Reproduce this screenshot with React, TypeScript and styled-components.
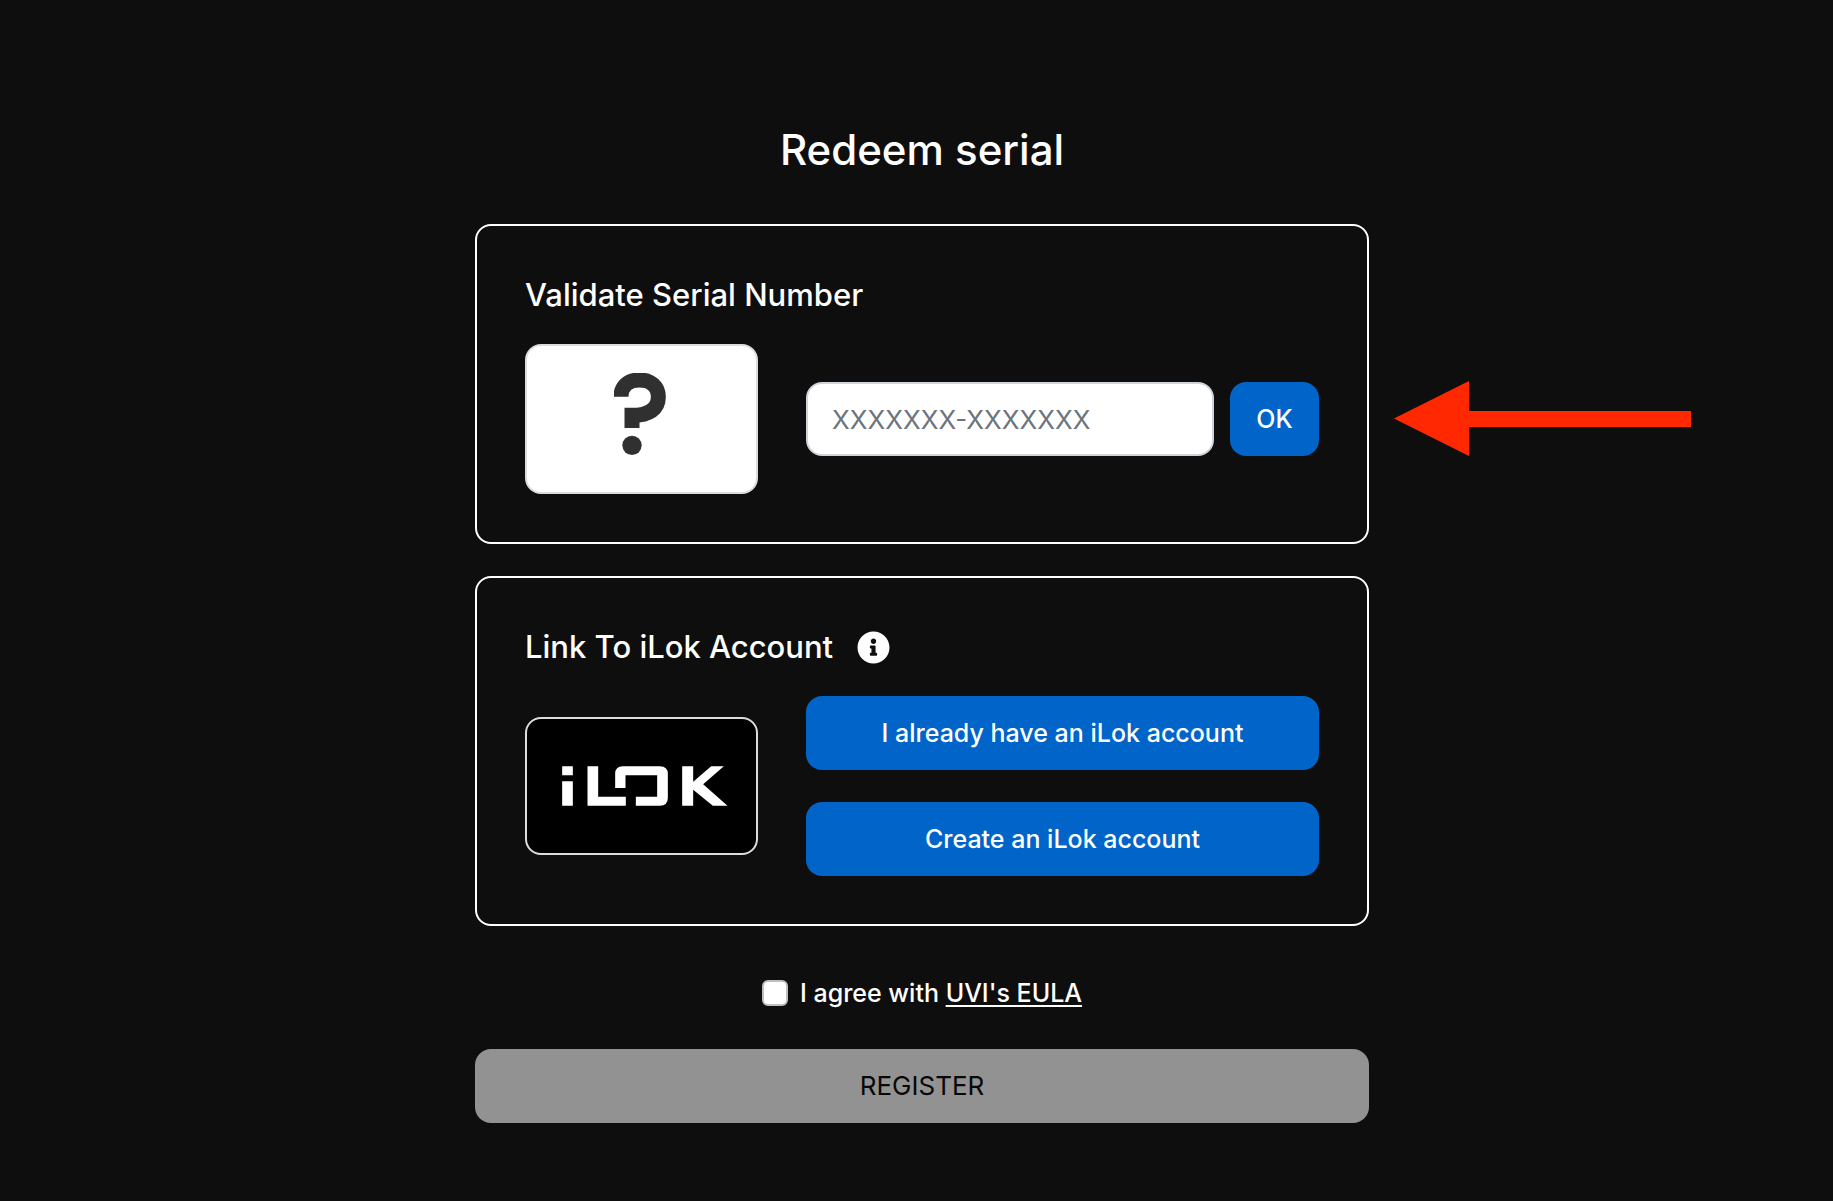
import React, { useState } from "react";
import styled, { createGlobalStyle } from "styled-components";
import { FaInfoCircle } from "react-icons/fa";

const GlobalStyle = createGlobalStyle`
  *, *::before, *::after { box-sizing: border-box; }
  body {
    margin: 0;
    min-height: 100vh;
    background: #0e0e0e;
    color: #fff;
    font-family: Inter, "Liberation Sans", sans-serif;
    font-size: 25px;
    line-height: 38px;
    font-weight: 500;
  }
`;

const Page = styled.main`
  display: flex;
  justify-content: center;
  padding: 122px 16px 76px 27px;
`;

const Form = styled.form`
  width: 100%;
  max-width: 894px;
`;

const Title = styled.h1`
  margin: 0 0 46px;
  font-size: 42px;
  line-height: 56px;
  font-weight: 500;
  text-align: center;
`;

const Card = styled.section`
  position: relative;
  margin-bottom: 32px;
  padding: 48px;
  border: 2px solid #fff;
  border-radius: 16px;
`;

const CardHeader = styled.header`
  display: flex;
  align-items: center;
  gap: 24px;
  margin-bottom: 28px;
`;

const CardTitle = styled.h2`
  margin: 0;
  font-size: 31px;
  line-height: 42px;
  font-weight: 500;
`;

const InfoButton = styled.button`
  display: flex;
  padding: 0;
  border: 0;
  background: none;
  color: #fff;
  font-size: 33px;
  cursor: pointer;
`;

const CardBody = styled.div`
  display: grid;
  grid-template-columns: 233px minmax(0, 1fr);
  align-items: center;
  gap: 48px;
`;

const Thumbnail = styled.div<{ $dark?: boolean }>`
  display: flex;
  align-items: center;
  justify-content: center;
  height: ${(p) => (p.$dark ? 138 : 150)}px;
  border: 2px solid #dcdcdc;
  border-radius: 16px;
  background: ${(p) => (p.$dark ? "#000" : "#fff")};
`;

const SerialRow = styled.div`
  display: flex;
  gap: 16px;
`;

const SerialInput = styled.input`
  flex: 1;
  min-width: 0;
  height: 74px;
  padding: 0 24px;
  border: 2px solid #ced4da;
  border-radius: 16px;
  background: #fff;
  color: #212529;
  font: inherit;
  font-size: 26px;
  font-weight: 400;
  &::placeholder {
    color: #6c757d;
    opacity: 1;
  }
`;

const Button = styled.button`
  height: 74px;
  padding: 0 24px;
  border: 0;
  border-radius: 16px;
  background: #0064c8;
  color: #fff;
  font: inherit;
  cursor: pointer;
  &:disabled {
    background: #929292;
    color: #080808;
    cursor: default;
  }
`;

const OkButton = styled(Button)`
  flex: 0 0 89px;
`;

const RegisterButton = styled(Button)`
  width: 100%;
  font-size: 26px;
  font-weight: 400;
`;

const ButtonStack = styled.div`
  display: grid;
  gap: 32px;
`;

const Agreement = styled.div`
  display: flex;
  align-items: center;
  justify-content: center;
  gap: 12px;
  margin: 48px 0 37px;
`;

const Checkbox = styled.input`
  appearance: none;
  width: 26px;
  height: 26px;
  margin: 0;
  border: 2px solid #bfbfbf;
  border-radius: 6px;
  background: #fff;
  &:checked {
    background: #0064c8;
  }
`;

const EulaLink = styled.a`
  color: inherit;
  text-decoration: underline;
  text-decoration-thickness: 2px;
  text-underline-offset: 3px;
`;

const Pointer = styled.svg`
  position: absolute;
  left: calc(100% + 27px);
  top: 155px;
  width: 298px;
  height: 76px;
`;

function ArrowPointer() {
  return (
    <Pointer viewBox="0 0 298 76" aria-hidden="true">
      <path d="M0 37.500 75 0V30H297V46H75V75Z" fill="#ff2800" />
    </Pointer>
  );
}

function UnknownProductIcon() {
  return (
    <svg width="56" height="93" viewBox="73 39 168 279" role="img" aria-label="Unknown product">
      <path
        d="M94 110C94 79 116 60 149 60C184 60 206 80 206 111C206 146 180 166 127 166V204"
        fill="none"
        stroke="#303030"
        strokeWidth="45"
        strokeMiterlimit="10"
      />
      <circle cx="127" cy="256" r="29" fill="#303030" />
    </svg>
  );
}

function ILokLogo() {
  return (
    <svg width="173" height="40" viewBox="135 496 518 120" fill="#fff" role="img" aria-label="iLok">
      <path d="M156 497h32v27h-32zM156 542h32v73h-32z" />
      <path d="M232 497h32v91h83v27H232z" />
      <path d="M315 562v-42q0-23 23-23h111q24 0 24 23v72q0 23-24 23h-72v-27h64v-64h-95v38z" />
      <path d="M516 497h33v46l54-46h38l-62 54 73 64h-44l-59-48v48h-33z" />
    </svg>
  );
}

export default function App() {
  const [serial, setSerial] = useState("");
  const [agreed, setAgreed] = useState(false);

  return (
    <>
      <GlobalStyle />
      <Page>
        <Form onSubmit={(e: React.FormEvent) => e.preventDefault()}>
          <Title>Redeem serial</Title>

          <Card>
            <CardHeader>
              <CardTitle>Validate Serial Number</CardTitle>
            </CardHeader>
            <CardBody>
              <Thumbnail>
                <UnknownProductIcon />
              </Thumbnail>
              <SerialRow>
                <SerialInput
                  aria-label="Serial number"
                  placeholder="XXXXXXX-XXXXXXX"
                  value={serial}
                  onChange={(e) => setSerial(e.target.value)}
                />
                <OkButton type="button">OK</OkButton>
              </SerialRow>
            </CardBody>
            <ArrowPointer />
          </Card>

          <Card>
            <CardHeader>
              <CardTitle>Link To iLok Account</CardTitle>
              <InfoButton type="button" aria-label="About iLok accounts">
                <FaInfoCircle />
              </InfoButton>
            </CardHeader>
            <CardBody>
              <Thumbnail $dark>
                <ILokLogo />
              </Thumbnail>
              <ButtonStack>
                <Button type="button">I already have an iLok account</Button>
                <Button type="button">Create an iLok account</Button>
              </ButtonStack>
            </CardBody>
          </Card>

          <Agreement>
            <Checkbox
              id="agree"
              type="checkbox"
              checked={agreed}
              onChange={(e) => setAgreed(e.target.checked)}
            />
            <label htmlFor="agree">
              I agree with <EulaLink href="#eula">UVI's EULA</EulaLink>
            </label>
          </Agreement>

          <RegisterButton type="submit" disabled={!agreed || !serial}>
            REGISTER
          </RegisterButton>
        </Form>
      </Page>
    </>
  );
}
